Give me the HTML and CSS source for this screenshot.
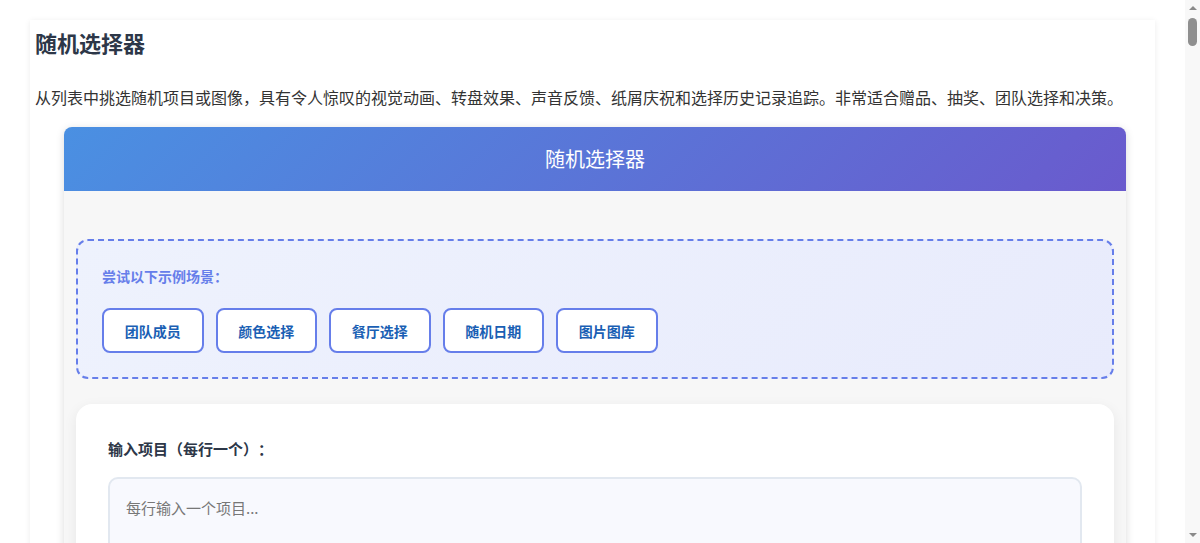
FILE: index.html
```html
<!DOCTYPE html>
<html lang="zh-CN">
<head>
<meta charset="utf-8">
<title>随机选择器</title>
<link rel="stylesheet" href="styles.css">
</head>
<body>
<main class="page">
  <h1 class="page-title">随机选择器</h1>
  <p class="page-desc">从列表中挑选随机项目或图像，具有令人惊叹的视觉动画、转盘效果、声音反馈、纸屑庆祝和选择历史记录追踪。非常适合赠品、抽奖、团队选择和决策。</p>

  <section class="widget">
    <header class="widget-head">随机选择器</header>
    <div class="widget-body">
      <div class="examples">
        <div class="examples-label">尝试以下示例场景：</div>
        <div class="examples-list">
          <button class="ex-btn">团队成员</button>
          <button class="ex-btn">颜色选择</button>
          <button class="ex-btn">餐厅选择</button>
          <button class="ex-btn">随机日期</button>
          <button class="ex-btn">图片图库</button>
        </div>
      </div>

      <div class="input-card">
        <label class="input-label" for="items">输入项目<span class="fw-open">（</span>每行一个<span class="fw-close">）</span>：</label>
        <textarea id="items" class="items" placeholder="每行输入一个项目..."></textarea>
        <div class="actions">
          <button class="primary">随机选择</button>
          <button class="secondary">清空列表</button>
        </div>
      </div>

      <div class="result-card">
        <div class="result-title">选择结果</div>
        <div class="result-box">点击“随机选择”开始</div>
      </div>

      <div class="result-card">
        <div class="result-title">选择历史</div>
        <div class="history">暂无历史记录</div>
      </div>
    </div>
  </section>

  <section class="article">
    <h2>如何使用随机选择器</h2>
    <p>在输入框中每行输入一个项目，然后点击“随机选择”按钮。选择器会以动画效果随机挑选一个项目，并在结果区域显示。</p>
    <h2>功能特点</h2>
    <p>支持文本和图像项目、转盘动画、声音反馈、纸屑庆祝效果以及完整的选择历史记录。</p>
    <h2>常见用途</h2>
    <p>适用于赠品抽奖、团队任务分配、餐厅选择、课堂点名以及各种需要公平随机决策的场景。</p>
  </section>
</main>

<div class="fake-scrollbar" aria-hidden="true">
  <span class="sb-arrow sb-up"></span>
  <span class="sb-track"><span class="sb-thumb"></span></span>
  <span class="sb-arrow sb-down"></span>
</div>
</body>
</html>
```
FILE: styles.css
```css
html, body {
  margin: 0;
  padding: 0;
  background: #ffffff;
}

body {
  font-family: "Noto Sans CJK SC", "Noto Sans", sans-serif;
  color: #333333;
  padding: 20px 45px 20px 30px;
  text-spacing-trim: space-all;
  font-feature-settings: "chws" 0, "halt" 0, "palt" 0;
}

/* window scrollbar, drawn over the right edge */
.fake-scrollbar {
  position: fixed;
  top: 0;
  right: 0;
  width: 15px;
  height: 100vh;
  background: #f8f8f8;
  display: flex;
  flex-direction: column;
  align-items: center;
}

.sb-arrow {
  width: 0;
  height: 0;
  border-left: 4px solid transparent;
  border-right: 4px solid transparent;
  margin: 6px 0;
}

.sb-up {
  border-bottom: 4px solid #8a8a8a;
}

.sb-down {
  border-top: 4px solid #8a8a8a;
}

.sb-track {
  flex: 1;
  width: 15px;
  display: flex;
  justify-content: center;
}

.sb-thumb {
  width: 9px;
  height: 28px;
  margin-top: 2px;
  border-radius: 5px;
  background: #8f8f8f;
}

.page {
  background: #ffffff;
  box-shadow: 0 1px 6px rgba(0, 0, 0, 0.08);
  padding: 6px 5px 40px;
  min-height: 9850px;
}

.page-title {
  margin: 0;
  font-size: 22px;
  line-height: 32px;
  font-weight: 700;
  color: #2d3748;
}

.page-desc {
  margin: 28px 0 19px;
  font-size: 16px;
  line-height: 22px;
  color: #333333;
}

.widget {
  width: 1062px;
  margin-left: 29px;
  border-radius: 8px;
  overflow: hidden;
  box-shadow: 0 2px 8px rgba(0, 0, 0, 0.15);
  background: #f7f7f7;
}

.widget-head {
  height: 64px;
  line-height: 64px;
  text-align: center;
  color: #ffffff;
  font-size: 20px;
  background: linear-gradient(135deg, #4a90e2 0%, #6a5acd 100%);
}

.widget-body {
  padding: 48px 12px 24px;
  display: flex;
  flex-direction: column;
  gap: 25px;
}

.examples {
  border: 2px dashed #667eea;
  border-radius: 12px;
  padding: 24px;
  background: linear-gradient(135deg, #eef2fd 0%, #e8ebfc 100%);
}

.examples-label {
  font-size: 14px;
  line-height: 22px;
  font-weight: 700;
  color: #667eea;
  margin-bottom: 21px;
}

.examples-list {
  display: flex;
  gap: 12px;
}

.ex-btn {
  height: 45px;
  padding: 0 20.75px;
  border: 2px solid #667eea;
  border-radius: 8px;
  background: #ffffff;
  color: #1a5fb4;
  font-family: "Noto Sans CJK SC", "Noto Sans", sans-serif;
  font-size: 14px;
  font-weight: 700;
  cursor: pointer;
}

.input-card,
.result-card {
  background: #ffffff;
  border-radius: 16px;
  box-shadow: 0 4px 14px rgba(0, 0, 0, 0.07);
  padding: 32px;
}

.input-label {
  display: block;
  font-size: 15px;
  line-height: 26px;
  font-weight: 700;
  color: #2d3748;
  margin-bottom: 15px;
}

.fw-open,
.fw-close {
  display: inline-block;
  width: 1em;
}

.fw-open {
  text-align: right;
}

.fw-close {
  text-align: left;
}

.items {
  display: block;
  box-sizing: border-box;
  width: 100%;
  height: 180px;
  border: 2px solid #e2e8f0;
  border-radius: 10px;
  background: #f8f9fe;
  padding: 16px;
  font-family: "Noto Sans CJK SC", "Noto Sans", sans-serif;
  font-size: 15px;
  line-height: 26px;
  color: #333333;
  resize: vertical;
}

.items::placeholder {
  color: #777777;
}

.actions {
  display: flex;
  gap: 12px;
  margin-top: 20px;
}

.primary,
.secondary {
  height: 46px;
  padding: 0 28px;
  border-radius: 8px;
  font-family: "Noto Sans CJK SC", "Noto Sans", sans-serif;
  font-size: 15px;
  font-weight: 700;
}

.primary {
  border: none;
  color: #ffffff;
  background: linear-gradient(135deg, #4a90e2 0%, #6a5acd 100%);
}

.secondary {
  border: 2px solid #e2e8f0;
  color: #2d3748;
  background: #ffffff;
}

.result-title {
  font-size: 16px;
  font-weight: 700;
  color: #2d3748;
  margin-bottom: 16px;
}

.result-box {
  min-height: 200px;
  border-radius: 12px;
  background: #f8f9fe;
  display: flex;
  align-items: center;
  justify-content: center;
  color: #777777;
  font-size: 16px;
}

.history {
  min-height: 120px;
  color: #777777;
  font-size: 14px;
}

.article {
  padding: 30px 29px;
}

.article h2 {
  font-size: 20px;
  color: #2d3748;
  margin: 24px 0 12px;
}

.article p {
  font-size: 16px;
  line-height: 26px;
  margin: 0;
}
```
